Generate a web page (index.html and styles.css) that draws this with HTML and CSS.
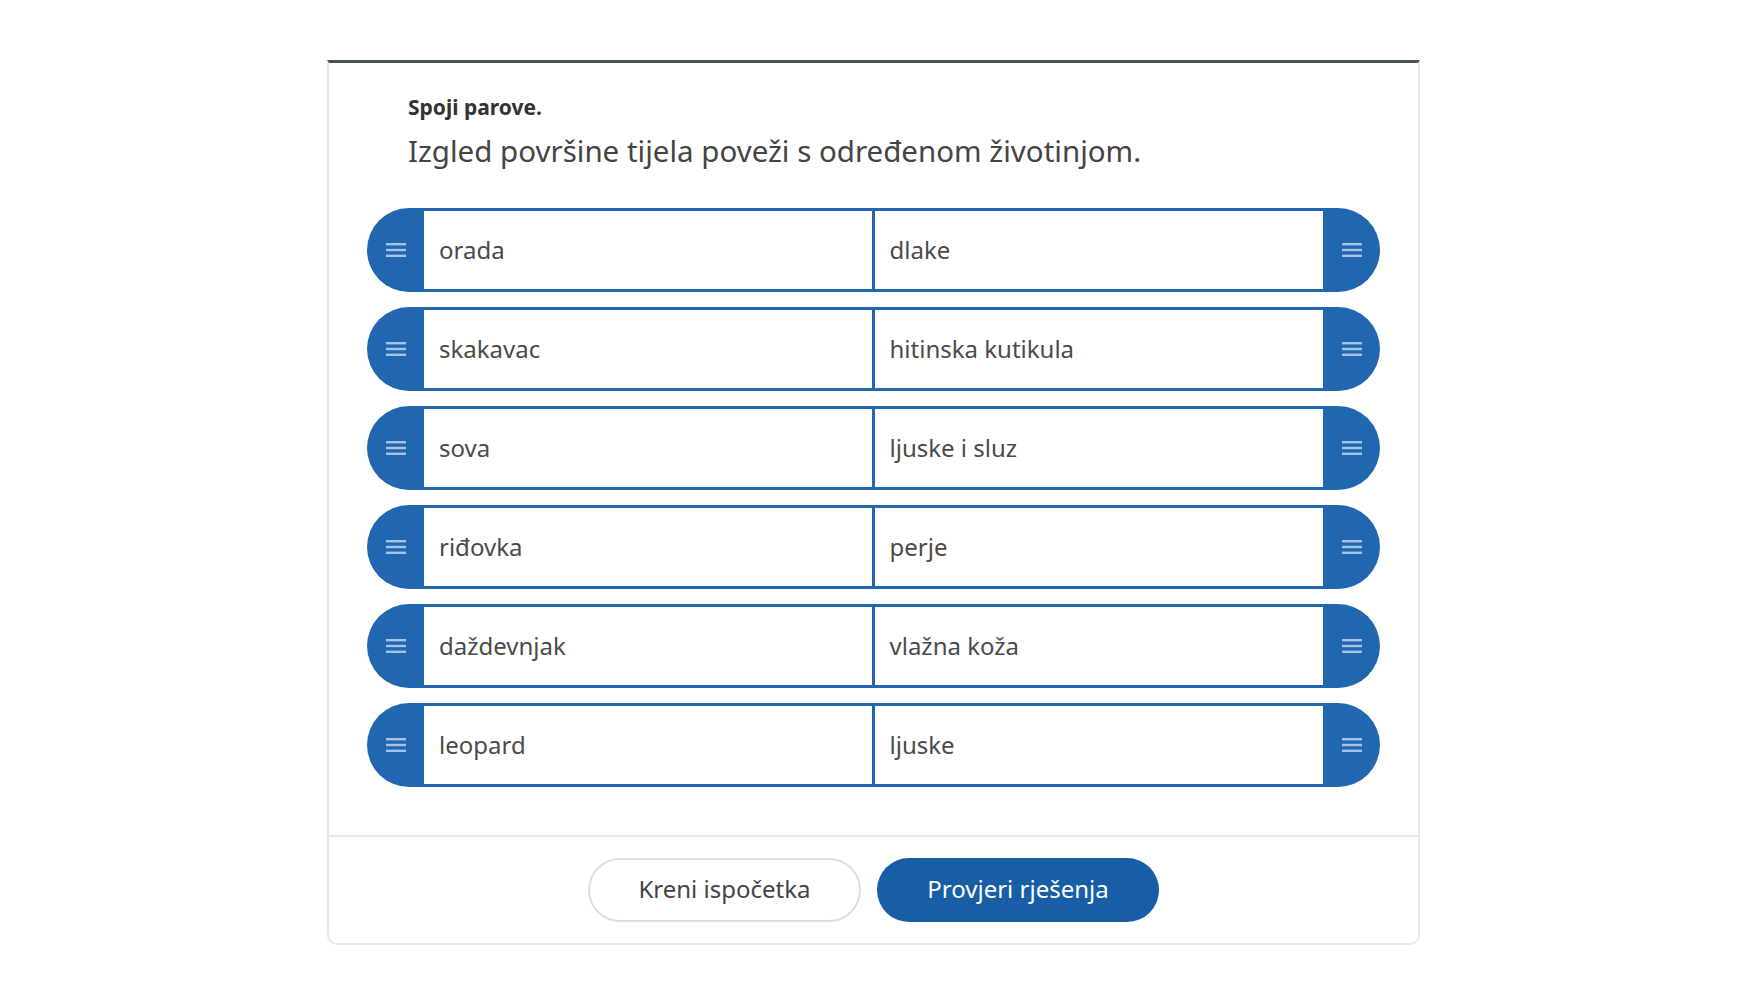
FILE: index.html
```html
<!DOCTYPE html>
<html lang="hr">
<head>
<meta charset="utf-8">
<title>Spoji parove</title>
<link rel="stylesheet" href="styles.css">
</head>
<body>
<div class="card">
  <div class="content">
    <div class="instruction">Spoji parove.</div>
    <div class="question">Izgled površine tijela poveži s određenom životinjom.</div>
    <div class="pairs">
      <div class="pair">
        <div class="item item-left"><span class="handle"><svg class="burger" viewBox="0 0 20 14"><rect y="0" width="20" height="2.4"/><rect y="5.8" width="20" height="2.4"/><rect y="11.6" width="20" height="2.4"/></svg></span><span class="label">orada</span></div>
        <div class="item item-right"><span class="label">dlake</span><span class="handle"><svg class="burger" viewBox="0 0 20 14"><rect y="0" width="20" height="2.4"/><rect y="5.8" width="20" height="2.4"/><rect y="11.6" width="20" height="2.4"/></svg></span></div>
      </div>
      <div class="pair">
        <div class="item item-left"><span class="handle"><svg class="burger" viewBox="0 0 20 14"><rect y="0" width="20" height="2.4"/><rect y="5.8" width="20" height="2.4"/><rect y="11.6" width="20" height="2.4"/></svg></span><span class="label">skakavac</span></div>
        <div class="item item-right"><span class="label">hitinska kutikula</span><span class="handle"><svg class="burger" viewBox="0 0 20 14"><rect y="0" width="20" height="2.4"/><rect y="5.8" width="20" height="2.4"/><rect y="11.6" width="20" height="2.4"/></svg></span></div>
      </div>
      <div class="pair">
        <div class="item item-left"><span class="handle"><svg class="burger" viewBox="0 0 20 14"><rect y="0" width="20" height="2.4"/><rect y="5.8" width="20" height="2.4"/><rect y="11.6" width="20" height="2.4"/></svg></span><span class="label">sova</span></div>
        <div class="item item-right"><span class="label">ljuske i sluz</span><span class="handle"><svg class="burger" viewBox="0 0 20 14"><rect y="0" width="20" height="2.4"/><rect y="5.8" width="20" height="2.4"/><rect y="11.6" width="20" height="2.4"/></svg></span></div>
      </div>
      <div class="pair">
        <div class="item item-left"><span class="handle"><svg class="burger" viewBox="0 0 20 14"><rect y="0" width="20" height="2.4"/><rect y="5.8" width="20" height="2.4"/><rect y="11.6" width="20" height="2.4"/></svg></span><span class="label">riđovka</span></div>
        <div class="item item-right"><span class="label">perje</span><span class="handle"><svg class="burger" viewBox="0 0 20 14"><rect y="0" width="20" height="2.4"/><rect y="5.8" width="20" height="2.4"/><rect y="11.6" width="20" height="2.4"/></svg></span></div>
      </div>
      <div class="pair">
        <div class="item item-left"><span class="handle"><svg class="burger" viewBox="0 0 20 14"><rect y="0" width="20" height="2.4"/><rect y="5.8" width="20" height="2.4"/><rect y="11.6" width="20" height="2.4"/></svg></span><span class="label">daždevnjak</span></div>
        <div class="item item-right"><span class="label">vlažna koža</span><span class="handle"><svg class="burger" viewBox="0 0 20 14"><rect y="0" width="20" height="2.4"/><rect y="5.8" width="20" height="2.4"/><rect y="11.6" width="20" height="2.4"/></svg></span></div>
      </div>
      <div class="pair">
        <div class="item item-left"><span class="handle"><svg class="burger" viewBox="0 0 20 14"><rect y="0" width="20" height="2.4"/><rect y="5.8" width="20" height="2.4"/><rect y="11.6" width="20" height="2.4"/></svg></span><span class="label">leopard</span></div>
        <div class="item item-right"><span class="label">ljuske</span><span class="handle"><svg class="burger" viewBox="0 0 20 14"><rect y="0" width="20" height="2.4"/><rect y="5.8" width="20" height="2.4"/><rect y="11.6" width="20" height="2.4"/></svg></span></div>
      </div>
    </div>
  </div>
  <div class="footer">
    <button class="btn btn-secondary">Kreni ispočetka</button>
    <button class="btn btn-primary">Provjeri rješenja</button>
  </div>
</div>
</body>
</html>
```

FILE: styles.css
```css
* { box-sizing: border-box; }

body {
  margin: 0;
  background: #ffffff;
  font-family: "Noto Sans", Roboto, sans-serif;
}

.card {
  width: 1093px;
  margin: 60px auto 0;
  border-top: 3px solid #4a5262;
  border-left: 2px solid #e8e8e8;
  border-right: 2px solid #e8e8e8;
  border-bottom: 2px solid #e8e8e8;
  border-radius: 0 0 10px 10px;
  background: #fff;
}

.content {
  padding: 32px 38px 48px 38px;
}

.instruction {
  padding-left: 41px;
  font-size: 21px;
  line-height: 24px;
  font-weight: 700;
  color: #333;
}

.question {
  padding-left: 41px;
  margin-top: 12px;
  font-size: 29.5px;
  line-height: 40px;
  font-weight: 400;
  color: #444;
}

.pairs {
  margin-top: 37px;
  display: flex;
  flex-direction: column;
  gap: 15px;
}

.pair {
  display: grid;
  grid-template-columns: 1fr 1fr;
  height: 84px;
}

.item {
  display: flex;
  height: 100%;
}

.handle {
  width: 57px;
  flex: none;
  background: #2167b0;
  display: flex;
  align-items: center;
  justify-content: center;
}

.item-left .handle {
  border-radius: 42px 0 0 42px;
}

.item-right .handle {
  border-radius: 0 42px 42px 0;
}

.burger {
  width: 20px;
  height: 14px;
  fill: #a7c4e6;
}

.label {
  flex: 1;
  display: flex;
  align-items: center;
  padding: 0 0 2px 15px;
  background: #fff;
  border-top: 3px solid #2167b0;
  border-bottom: 3px solid #2167b0;
  font-size: 24px;
  color: #4a4a4a;
}

.item-left .label {
  border-right: 2px solid #2167b0;
}

.item-right .label {
  border-left: 1px solid #2167b0;
}

.footer {
  border-top: 2px solid #e6e6e6;
  padding: 21px 0 21px;
  display: flex;
  justify-content: center;
  gap: 16px;
}

.btn {
  height: 64px;
  padding: 0 0 4px;
  border-radius: 32px;
  font-family: "Noto Sans", Roboto, sans-serif;
  font-size: 24px;
  cursor: pointer;
}

.btn-secondary {
  width: 273px;
  background: #fff;
  border: 2px solid #dedede;
  color: #444;
}

.btn-primary {
  width: 282px;
  background: #185ea6;
  border: none;
  color: #fff;
}
```
